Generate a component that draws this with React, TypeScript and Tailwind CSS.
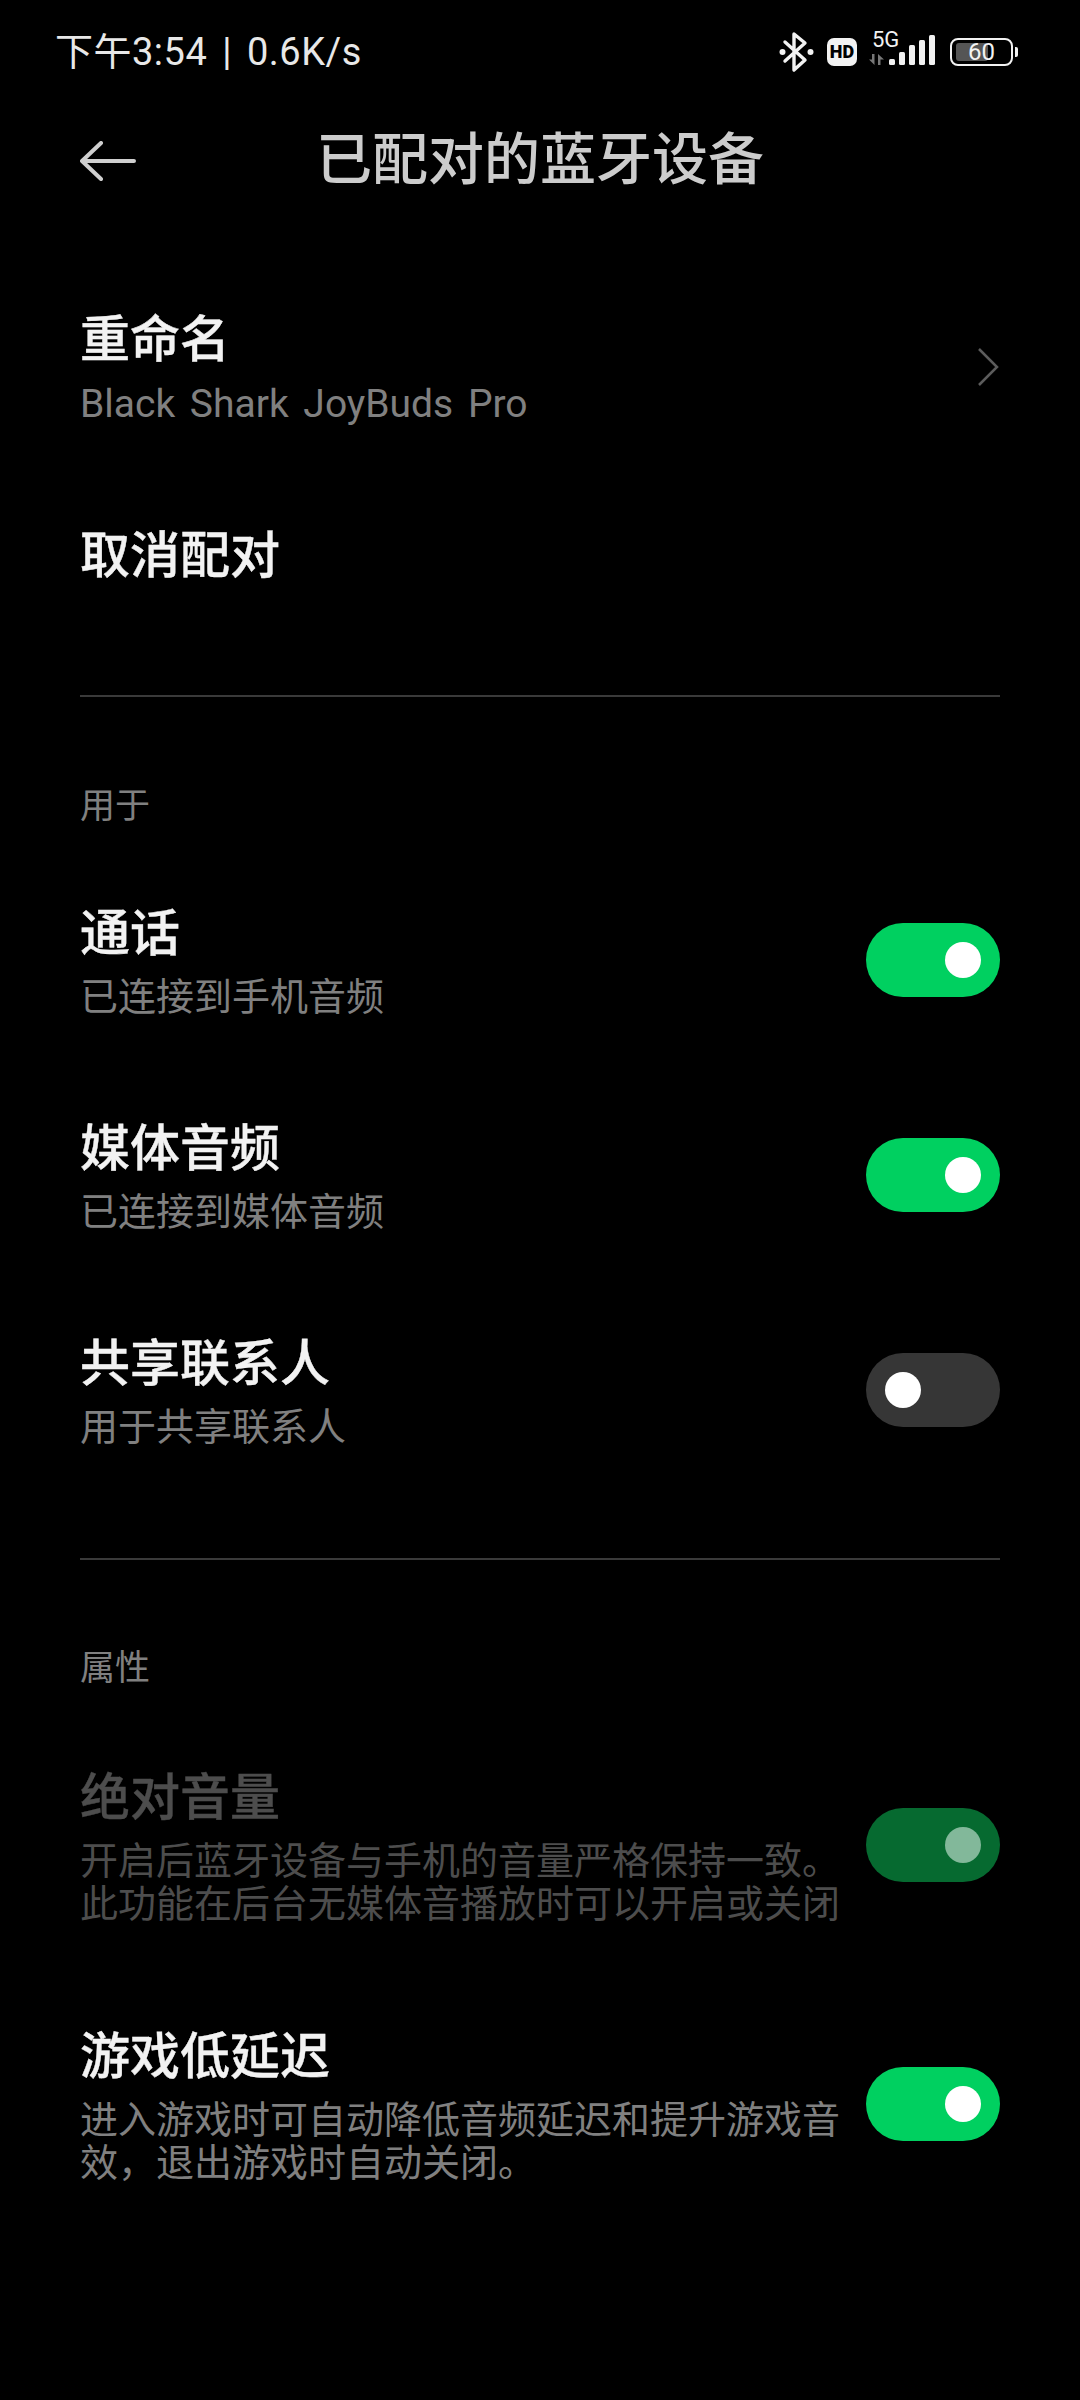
const cjk = 'font-["Roboto","Noto_Sans_CJK_SC",sans-serif]';

interface ToggleProps {
  on?: boolean;
  dim?: boolean;
}

function Toggle({ on = false, dim = false }: ToggleProps) {
  const track = !on ? 'bg-[#363636]' : dim ? 'bg-[#066a30]' : 'bg-[#00d060]';
  const thumb = dim ? 'bg-[#82b89a]' : 'bg-white';
  return (
    <div className={`flex h-[74px] w-[134px] shrink-0 items-center rounded-full px-[19px] ${on ? 'justify-end' : 'justify-start'} ${track}`}>
      <div className={`h-[36px] w-[36px] rounded-full ${thumb}`} />
    </div>
  );
}

interface RowProps {
  title: string;
  sub: string;
  on?: boolean;
  dim?: boolean;
  className?: string;
}

function SwitchRow({ title, sub, on, dim, className = '' }: RowProps) {
  return (
    <div className={`flex items-center justify-between ${className}`}>
      <div className="w-[780px]">
        <div className={`h-[64px] text-[50px] leading-[68px] font-medium [-webkit-text-stroke:0.4px_currentColor] ${dim ? 'text-[#4d4d4d]' : 'text-[#f2f2f2]'}`}>{title}</div>
        <div className={`mt-[12px] text-[38px] leading-[43px] ${dim ? 'text-[#4d4d4d]' : 'text-[#808080]'}`}>{sub}</div>
      </div>
      <Toggle on={on} dim={dim} />
    </div>
  );
}

function SectionLabel({ text, className = '' }: { text: string; className?: string }) {
  return <div className={`h-[50px] text-[35px] leading-[50px] text-[#808080] ${className}`}>{text}</div>;
}

function StatusIcons() {
  return (
    <div className="flex items-center">
      {/* bluetooth */}
      <svg width="36" height="42" viewBox="0 0 36 42" fill="none" className="mr-[12px]">
        <path d="M6 11 L26 29 L15 39 L15 3 L26 12 L6 30" stroke="#f2f2f2" strokeWidth="3.4" strokeLinejoin="round" strokeLinecap="round" />
        <circle cx="3.5" cy="21" r="3" fill="#f2f2f2" />
        <circle cx="31.5" cy="21" r="3" fill="#f2f2f2" />
      </svg>
      {/* HD */}
      <div className="flex h-[28px] w-[30px] items-center justify-center rounded-[7px] bg-[#f2f2f2] font-['Roboto',sans-serif] text-[18px] leading-none font-black text-black">HD</div>
      {/* 5G + signal */}
      <div className="relative ml-[12px] h-[36px] w-[67px]">
        <span className="absolute top-[-5px] left-[3px] font-['Roboto',sans-serif] text-[22px] leading-[22px] text-[#f2f2f2]">5G</span>
        <svg width="67" height="36" viewBox="0 0 67 36" className="absolute top-0 left-0">
          <path d="M3 20 H5.5 V31 L0 25.5 H3 Z M9 31 V20 L15 25.5 H11.5 V31 Z" fill="#777" />
          <rect x="20" y="25" width="6" height="6" rx="1.5" fill="#f2f2f2" />
          <rect x="30" y="18" width="6" height="13" rx="1.5" fill="#f2f2f2" />
          <rect x="40" y="11" width="6" height="20" rx="1.5" fill="#f2f2f2" />
          <rect x="50" y="6" width="6" height="25" rx="1.5" fill="#f2f2f2" />
          <rect x="60" y="1" width="6" height="30" rx="1.5" fill="#f2f2f2" />
        </svg>
      </div>
      {/* battery */}
      <div className="relative ml-[14px] flex h-[28px] w-[63px] items-center justify-center rounded-[8px] border-[2.5px] border-[#f2f2f2]">
        <div className="absolute top-[3px] bottom-[3px] left-[4px] w-[32px] rounded-[3px] bg-[#555555]" />
        <span className="relative font-['Roboto',sans-serif] text-[24px] leading-none text-[#f2f2f2]">60</span>
      </div>
      <div className="ml-[2px] h-[10px] w-[3px] rounded-r-[2px] bg-[#f2f2f2]" />
    </div>
  );
}

export default function App() {
  return (
    <div lang="zh-CN" className={`h-[2400px] w-[1080px] overflow-hidden bg-black ${cjk}`}>
      {/* статус-бар */}
      <div className="flex h-[104px] items-center justify-between pr-[62px] pl-[55px]">
        <span className="text-[38px] leading-none tracking-[0.5px] [word-spacing:5px] text-[#e8e8e8]">下午3:54 | 0.6K/s</span>
        <StatusIcons />
      </div>

      {/* шапка */}
      <div className="relative flex h-[112px] items-center justify-center">
        <svg width="56" height="40" viewBox="0 0 56 40" fill="none" className="absolute top-[37px] left-[80px]">
          <path d="M21 2 L2 20 L21 38 M2 20 H54" stroke="#cfcfcf" strokeWidth="4" strokeLinecap="round" strokeLinejoin="round" />
        </svg>
        <span className="text-[56px] leading-none font-medium text-[#cccccc]">已配对的蓝牙设备</span>
      </div>

      <div className="px-[80px]">
        {/* переименование */}
        <div className="mt-[92px] flex items-center justify-between">
          <div>
            <div className="h-[64px] text-[50px] leading-[64px] font-medium [-webkit-text-stroke:0.4px_currentColor] text-[#f2f2f2]">重命名</div>
            <div className="mt-[11px] text-[39px] leading-[43px] [word-spacing:5px] text-[#808080]">Black Shark JoyBuds Pro</div>
          </div>
          <svg width="24" height="40" viewBox="0 0 24 40" fill="none">
            <path d="M3 2 L21 20 L3 38" stroke="#5c5c5c" strokeWidth="2.5" />
          </svg>
        </div>
        <div className="mt-[97px] h-[64px] text-[50px] leading-[66px] font-medium [-webkit-text-stroke:0.4px_currentColor] text-[#f2f2f2]">取消配对</div>
        <div className="mt-[108px] h-[2px] bg-[#3a3a3a]" />

        {/* используется для */}
        <SectionLabel text="用于" className="mt-[85px]" />
        <SwitchRow className="mt-[68px]" title="通话" sub="已连接到手机音频" on />
        <SwitchRow className="mt-[96px]" title="媒体音频" sub="已连接到媒体音频" on />
        <SwitchRow className="mt-[96px]" title="共享联系人" sub="用于共享联系人" />
        <div className="mt-[109px] h-[2px] bg-[#3a3a3a]" />

        {/* свойства */}
        <SectionLabel text="属性" className="mt-[84px]" />
        <SwitchRow className="mt-[70px]" title="绝对音量" sub="开启后蓝牙设备与手机的音量严格保持一致。此功能在后台无媒体音播放时可以开启或关闭" on dim />
        <SwitchRow className="mt-[97px]" title="游戏低延迟" sub="进入游戏时可自动降低音频延迟和提升游戏音效，退出游戏时自动关闭。" on />
      </div>
    </div>
  );
}
